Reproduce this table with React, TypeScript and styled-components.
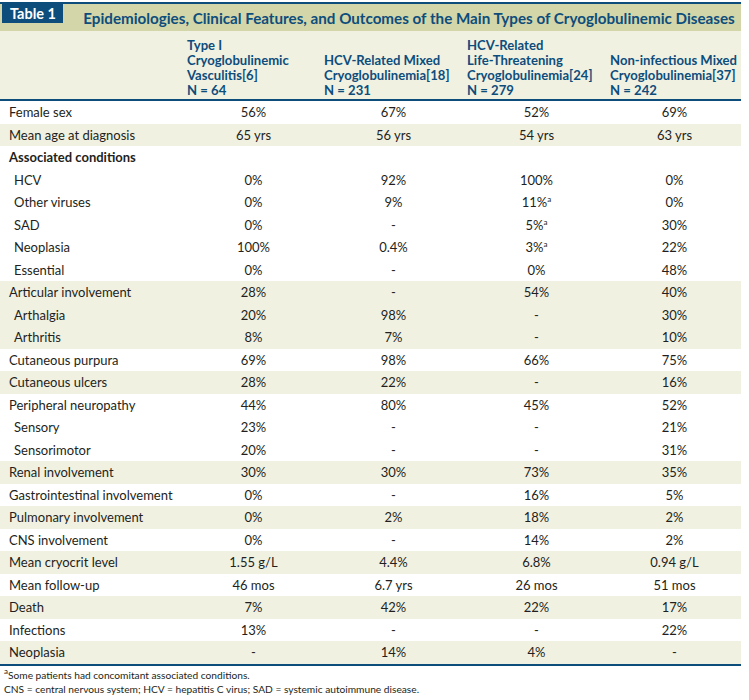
import React from 'react';
import styled, { createGlobalStyle } from 'styled-components';

const navy = '#0d4d7c';
const ink = '#231f20';
const cream = '#f1f1e2';
const olive = '#d3d6a8';

const GlobalStyle = createGlobalStyle`
  html, body {
    margin: 0;
    padding: 0;
    background: #ffffff;
  }
  body {
    font-family: Lato, "Open Sans", "Liberation Sans", sans-serif;
    color: ${ink};
  }
`;

const Page = styled.div`
  width: 741px;
  padding-top: 2px;
`;

const TitleBar = styled.div`
  display: flex;
  align-items: flex-start;
  height: 27px;
  background: ${olive};
  border-top: 2px solid ${navy};
`;

const TableTag = styled.div`
  flex-shrink: 0;
  white-space: nowrap;
  background: ${navy};
  color: #ffffff;
  font-weight: 700;
  font-size: 14.5px;
  line-height: 19px;
  padding: 0 7px 0 8px;
  margin-left: 2px;
`;

const Title = styled.h1`
  flex: 1;
  min-width: 0;
  margin: 0;
  padding: 4px 0 0 14px;
  text-align: center;
  color: ${navy};
  font-size: 15.2px;
  font-weight: 700;
  line-height: 20px;
  white-space: nowrap;
`;

const Table = styled.table`
  width: 741px;
  border-collapse: collapse;
  table-layout: fixed;
  font-size: 13px;
`;

const HeadRow = styled.tr`
  background: ${cream};
  border-bottom: 2px solid ${navy};
`;

const HeadCell = styled.th`
  height: 67px;
  padding: 0 0 1px 2px;
  vertical-align: bottom;
  text-align: left;
  color: ${navy};
  font-weight: 700;
  font-size: 13.1px;
  line-height: 15px;
  white-space: nowrap;
`;

const Row = styled.tr<{ $shaded?: boolean; $last?: boolean }>`
  background: ${(p) => (p.$shaded ? cream : '#ffffff')};
  border-bottom: ${(p) => (p.$last ? `2px solid ${navy}` : 'none')};
`;

const Label = styled.td<{ $indent?: boolean; $bold?: boolean }>`
  height: 22.5px;
  padding: 0 0 0 ${(p) => (p.$indent ? 14 : 9)}px;
  font-weight: ${(p) => (p.$bold ? 700 : 400)};
  white-space: nowrap;
  line-height: 22px;
`;

const Value = styled.td`
  text-align: center;
  white-space: nowrap;
  line-height: 22px;
  padding: 0;
`;

const Sup = styled.sup`
  font-size: 8px;
  line-height: 0;
  vertical-align: 5px;
`;

const Notes = styled.div`
  padding: 2px 0 0 4px;
  font-size: 10.2px;
  line-height: 14.5px;
  color: ${ink};
`;

type Cell = string | [string, boolean];

interface DataRow {
  label: string;
  values?: Cell[];
  indent?: boolean;
  bold?: boolean;
  shaded?: boolean;
}

const rows: DataRow[] = [
  { label: 'Female sex', values: ['56%', '67%', '52%', '69%'] },
  { label: 'Mean age at diagnosis', values: ['65 yrs', '56 yrs', '54 yrs', '63 yrs'], shaded: true },
  { label: 'Associated conditions', bold: true },
  { label: 'HCV', indent: true, values: ['0%', '92%', '100%', '0%'] },
  { label: 'Other viruses', indent: true, values: ['0%', '9%', ['11%', true], '0%'] },
  { label: 'SAD', indent: true, values: ['0%', '-', ['5%', true], '30%'] },
  { label: 'Neoplasia', indent: true, values: ['100%', '0.4%', ['3%', true], '22%'] },
  { label: 'Essential', indent: true, values: ['0%', '-', '0%', '48%'] },
  { label: 'Articular involvement', values: ['28%', '-', '54%', '40%'], shaded: true },
  { label: 'Arthalgia', indent: true, values: ['20%', '98%', '-', '30%'], shaded: true },
  { label: 'Arthritis', indent: true, values: ['8%', '7%', '-', '10%'], shaded: true },
  { label: 'Cutaneous purpura', values: ['69%', '98%', '66%', '75%'] },
  { label: 'Cutaneous ulcers', values: ['28%', '22%', '-', '16%'], shaded: true },
  { label: 'Peripheral neuropathy', values: ['44%', '80%', '45%', '52%'] },
  { label: 'Sensory', indent: true, values: ['23%', '-', '-', '21%'] },
  { label: 'Sensorimotor', indent: true, values: ['20%', '-', '-', '31%'] },
  { label: 'Renal involvement', values: ['30%', '30%', '73%', '35%'], shaded: true },
  { label: 'Gastrointestinal involvement', values: ['0%', '-', '16%', '5%'] },
  { label: 'Pulmonary involvement', values: ['0%', '2%', '18%', '2%'], shaded: true },
  { label: 'CNS involvement', values: ['0%', '-', '14%', '2%'] },
  { label: 'Mean cryocrit level', values: ['1.55 g/L', '4.4%', '6.8%', '0.94 g/L'], shaded: true },
  { label: 'Mean follow-up', values: ['46 mos', '6.7 yrs', '26 mos', '51 mos'] },
  { label: 'Death', values: ['7%', '42%', '22%', '17%'], shaded: true },
  { label: 'Infections', values: ['13%', '-', '-', '22%'] },
  { label: 'Neoplasia', values: ['-', '14%', '4%', '-'], shaded: true },
];

const headers: string[][] = [
  ['Type I', 'Cryoglobulinemic', 'Vasculitis[6]', 'N = 64'],
  ['HCV-Related Mixed', 'Cryoglobulinemia[18]', 'N = 231'],
  ['HCV-Related', 'Life-Threatening', 'Cryoglobulinemia[24]', 'N = 279'],
  ['Non-infectious Mixed', 'Cryoglobulinemia[37]', 'N = 242'],
];

const renderCell = (c: Cell) =>
  typeof c === 'string' ? (
    c
  ) : (
    <>
      {c[0]}
      <Sup>a</Sup>
    </>
  );

export default function App() {
  return (
    <>
      <GlobalStyle />
      <Page>
        <TitleBar>
          <TableTag>Table 1</TableTag>
          <Title>
            Epidemiologies, Clinical Features, and Outcomes of the Main Types of Cryoglobulinemic Diseases
          </Title>
        </TitleBar>
        <Table>
          <colgroup>
            <col style={{ width: 185 }} />
            <col style={{ width: 137 }} />
            <col style={{ width: 143 }} />
            <col style={{ width: 143 }} />
            <col style={{ width: 133 }} />
          </colgroup>
          <thead>
            <HeadRow>
              <HeadCell />
              {headers.map((lines, i) => (
                <HeadCell key={i}>
                  {lines.map((l, j) => (
                    <div key={j}>{l}</div>
                  ))}
                </HeadCell>
              ))}
            </HeadRow>
          </thead>
          <tbody>
            {rows.map((r, i) => (
              <Row key={i} $shaded={r.shaded} $last={i === rows.length - 1}>
                <Label $indent={r.indent} $bold={r.bold}>
                  {r.label}
                </Label>
                {(r.values ?? ['', '', '', '']).map((v, j) => (
                  <Value key={j}>{renderCell(v)}</Value>
                ))}
              </Row>
            ))}
          </tbody>
        </Table>
        <Notes>
          <div>
            <Sup>a</Sup>Some patients had concomitant associated conditions.
          </div>
          <div>CNS = central nervous system; HCV = hepatitis C virus; SAD = systemic autoimmune disease.</div>
        </Notes>
      </Page>
    </>
  );
}
